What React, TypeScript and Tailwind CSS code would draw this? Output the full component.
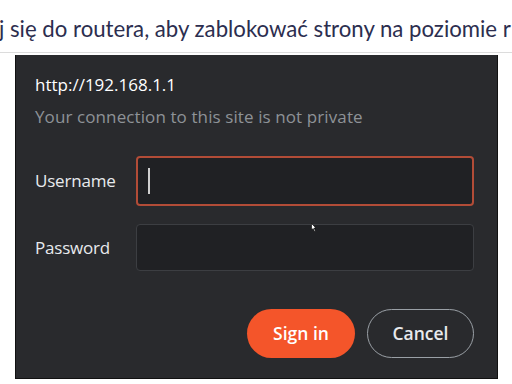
import React from "react";

export default function App() {
  return (
    <div className="w-[512px] h-[384px] bg-white overflow-hidden relative" style={{ fontFamily: '"Open Sans", "Noto Sans", sans-serif' }}>
      <div className="h-[53px] flex items-center whitespace-nowrap text-[22.2px] text-[#2c2e4f] border-b border-[#dcdcdc]" style={{ fontFamily: 'Lato, "Noto Sans", sans-serif' }}>
        <span className="-ml-[1px] pt-[6px]">j się do routera, aby zablokować strony na poziomie r</span>
      </div>
      <div className="mt-[2px] ml-[15px] w-[483px] h-[324px] bg-[#292a2d] border-x border-b border-[#111] relative">
        <div className="pl-[19px] pt-[18px]">
          <div className="text-[17px] text-white leading-[24px] tracking-[0px]">http://192.168.1.1</div>
          <div className="mt-[8px] text-[17px] text-[#8e9297] leading-[24px] tracking-[0.1px]">Your connection to this site is not private</div>
        </div>
        <div className="mt-[27px] pl-[19px] pr-[23px] flex flex-col gap-[18px]">
          <div className="flex items-center">
            <div className="w-[101px] text-[17px] text-[#e8eaed] tracking-[-0.2px]">Username</div>
            <div className="flex-1 h-[50px] rounded-[4px] border-2 border-[#b24c37] bg-[#202124] flex items-center pl-[10px]">
              <div className="w-[2px] h-[26px] bg-[#d0d0d0]" />
            </div>
          </div>
          <div className="flex items-center">
            <div className="w-[101px] text-[17px] text-[#e8eaed] tracking-[-0.2px]">Password</div>
            <div className="flex-1 h-[47px] rounded-[4px] border border-[#3c3e42] bg-[#202124]" />
          </div>
        </div>
        <div className="mt-[38px] pr-[23px] flex justify-end gap-[12px]">
          <button className="w-[108px] h-[49px] rounded-full bg-[#f4552a] text-white text-[17.5px] font-semibold">Sign in</button>
          <button className="w-[107px] h-[49px] rounded-full border border-[#9aa0a6] text-[#e8eaed] text-[17.5px] font-semibold">Cancel</button>
        </div>
        <svg className="absolute left-[295px] top-[168px]" width="6" height="9" viewBox="0 0 6 9">
          <path d="M0.5 0.5 L0.5 7 L2 5.5 L3.5 8.5 L4.5 8 L3 5 L5 5 Z" fill="#fff" stroke="#000" strokeWidth="0.6" />
        </svg>
      </div>
    </div>
  );
}
